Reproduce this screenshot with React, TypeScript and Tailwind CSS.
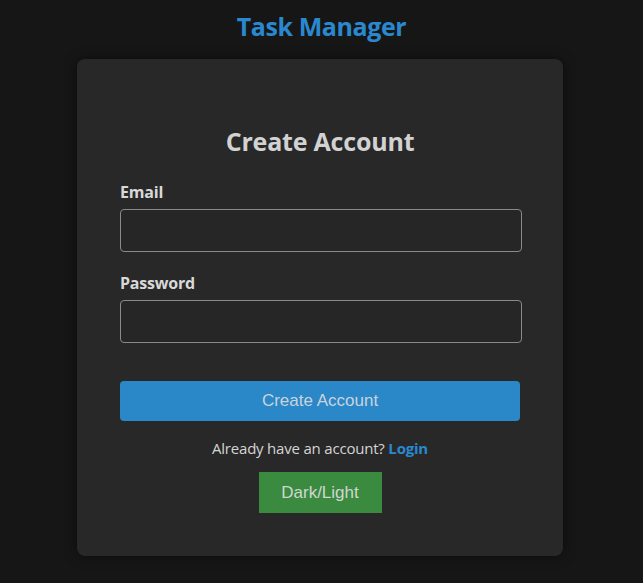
export default function App() {
  return (
    <div
      className="min-h-[583px] bg-[#161616] flex flex-col"
      style={{ fontFamily: '"Open Sans", "Noto Sans", sans-serif' }}
    >
      <h1 className="mt-[9px] self-center text-[25px] leading-[34px] font-bold text-[#2a88cf] tracking-[-0.4px]">
        Task Manager
      </h1>
      <div className="mt-[16px] ml-[77px] w-[486px] h-[497px] bg-[#282828] rounded-[8px] shadow-[0_0_12px_rgba(0,0,0,0.5)] px-[43px] pt-[66px]">
        <h2 className="text-center text-[25px] leading-[32px] font-bold text-[#d2d2d2] tracking-[-0.2px]">
          Create Account
        </h2>
        <form className="mt-[25px] flex flex-col" onSubmit={(e) => e.preventDefault()}>
          <label className="text-[16px] leading-[20px] font-bold text-[#d8d8d8] tracking-[-0.2px]">Email</label>
          <input
            type="email"
            className="mt-[7px] w-[402px] h-[43px] rounded-[4px] border border-[#8a8a8a] bg-[#262626] text-[#ddd] px-3 outline-none"
          />
          <label className="mt-[21px] text-[16px] leading-[20px] font-bold text-[#d8d8d8] tracking-[-0.2px]">Password</label>
          <input
            type="password"
            className="mt-[7px] w-[402px] h-[43px] rounded-[4px] border border-[#8a8a8a] bg-[#262626] text-[#ddd] px-3 outline-none"
          />
          <button
            type="submit"
            className="mt-[38px] w-[400px] h-[40px] rounded-[4px] bg-[#2a87c8] text-[17px] text-[#c9d3dc]"
            style={{ fontFamily: '"Liberation Sans", Arial, sans-serif' }}
          >
            Create Account
          </button>
        </form>
        <p className="mt-[17px] text-center text-[15px] leading-[20px] text-[#d4d4d4] tracking-[-0.2px]">
          Already have an account?{" "}
          <a href="#" className="font-bold text-[#2a88cf]">
            Login
          </a>
        </p>
        <div className="mt-[14px] flex justify-center">
          <button
            className="w-[123px] h-[41px] bg-[#3a8a3f] text-[17px] text-[#d0d6d0]"
            style={{ fontFamily: '"Liberation Sans", Arial, sans-serif' }}
          >
            Dark/Light
          </button>
        </div>
      </div>
    </div>
  );
}
